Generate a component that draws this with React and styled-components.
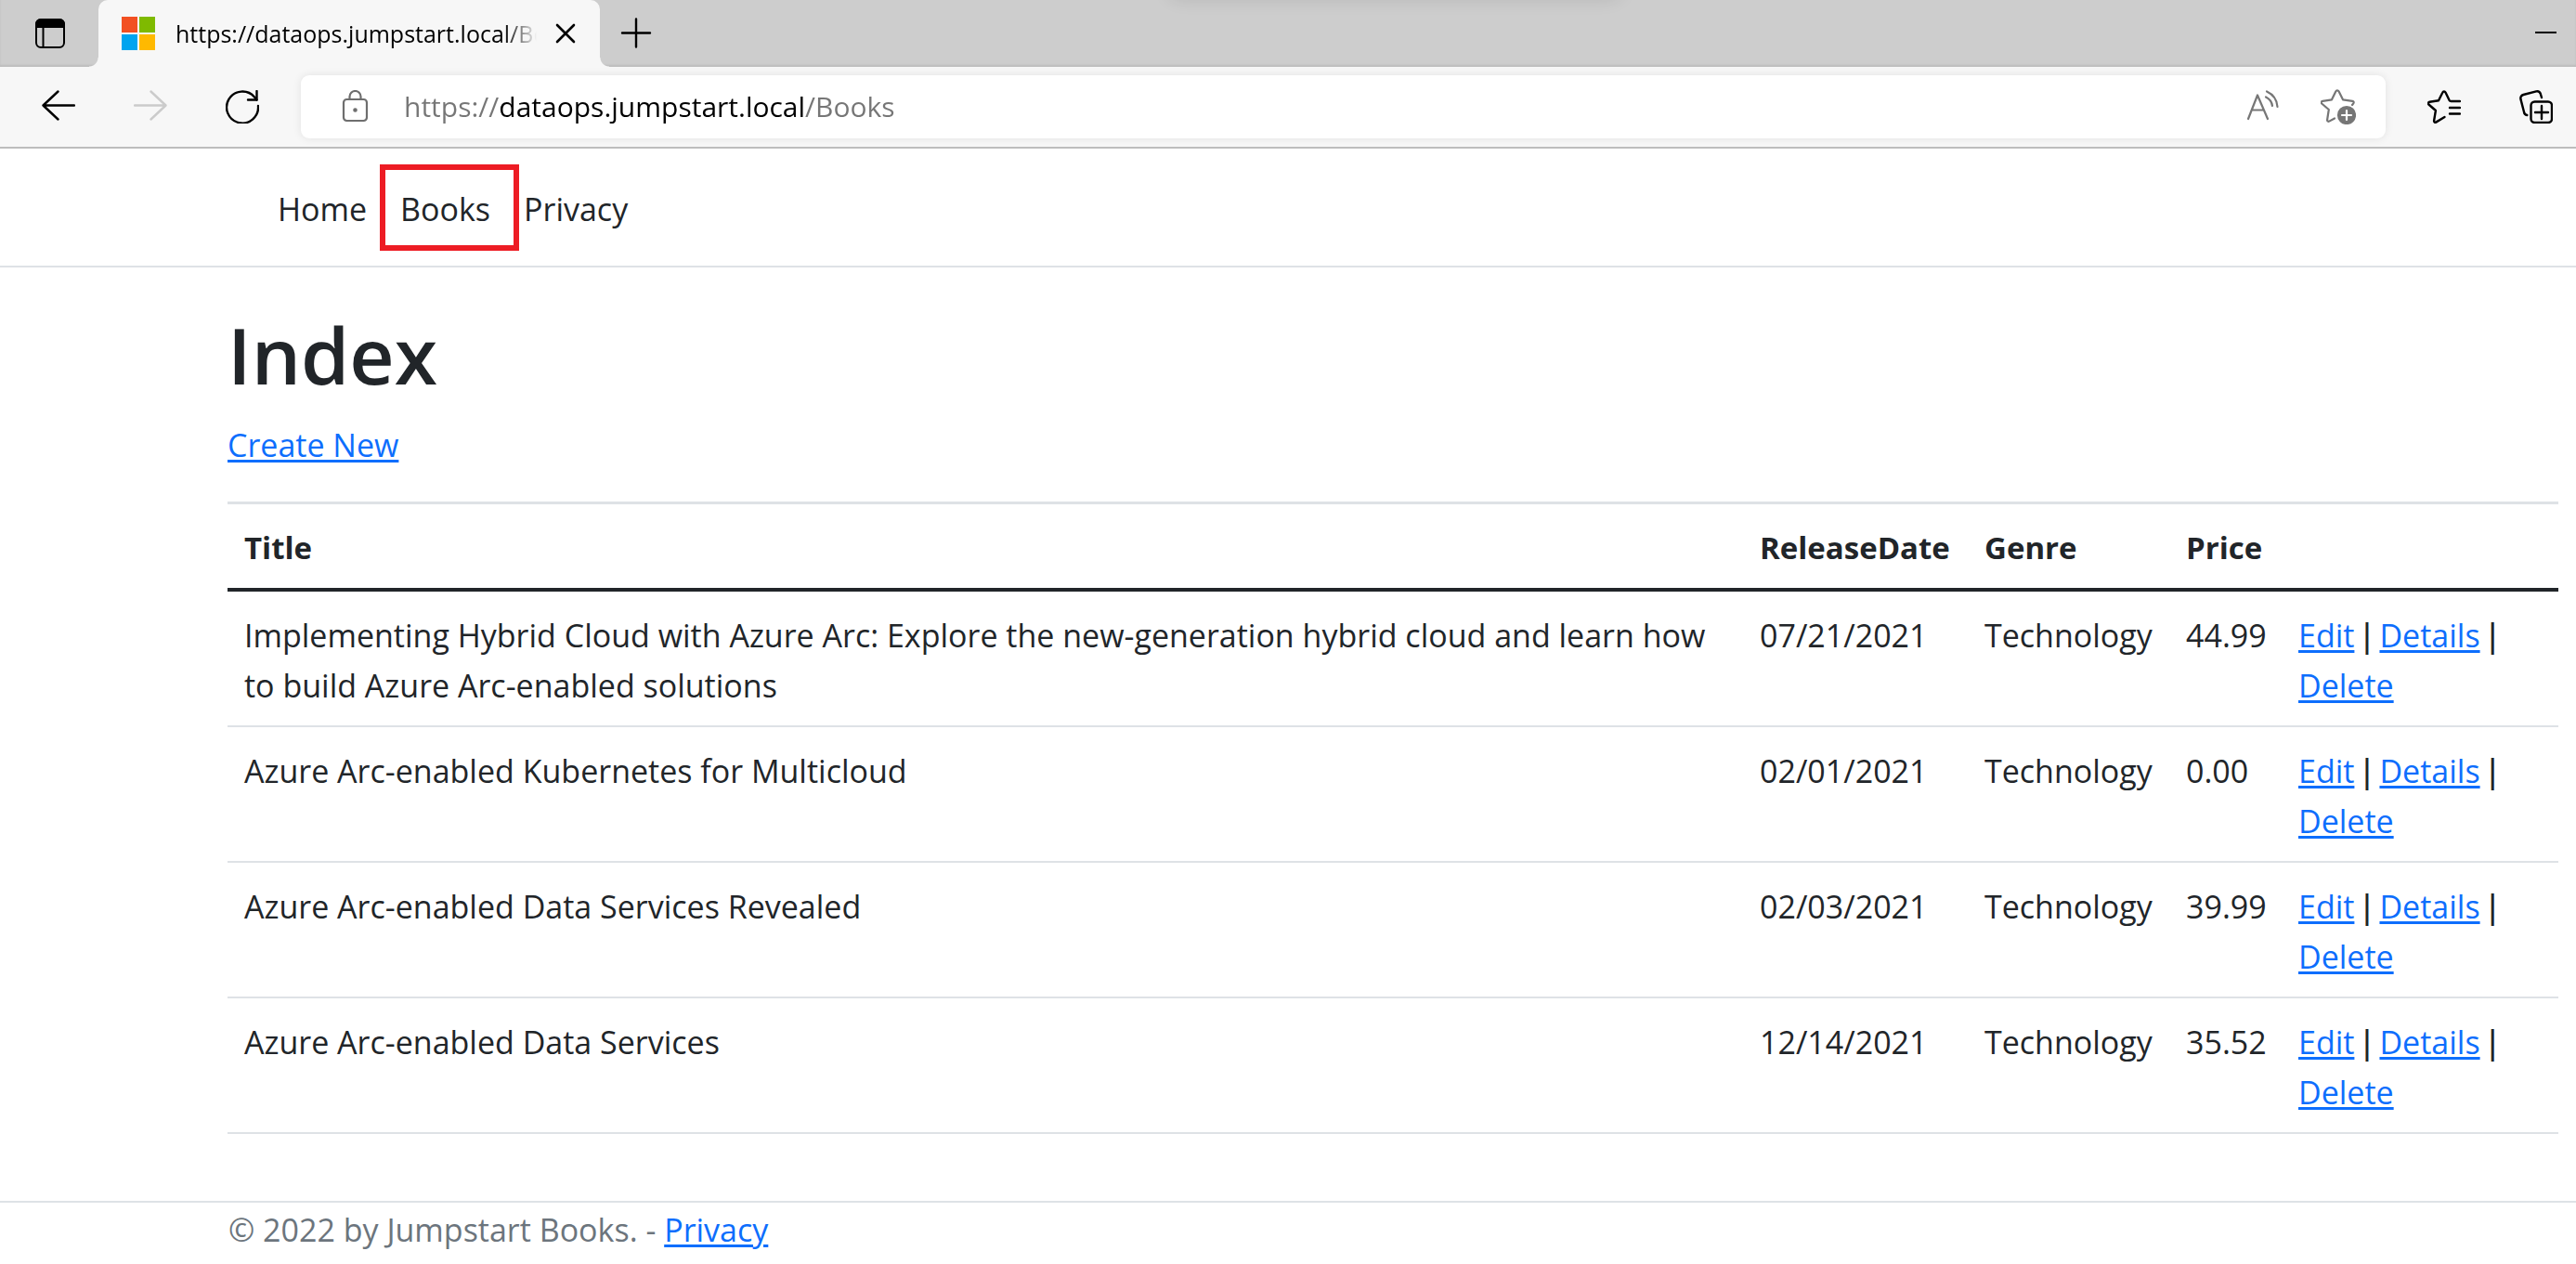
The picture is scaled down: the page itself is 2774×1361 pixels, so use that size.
import React from "react";
import styled, { createGlobalStyle } from "styled-components";

const GlobalStyle = createGlobalStyle`
  *, *::before, *::after { box-sizing: border-box; }
  body {
    margin: 0;
    background: #fff;
    color: #212529;
    font-family: "Open Sans", "Noto Sans", sans-serif;
    font-size: 34px;
    line-height: 54px;
  }
`;

/* ---------- browser frame ---------- */

const TabStrip = styled.div`
  position: relative;
  display: flex;
  align-items: center;
  height: 72px;
  padding: 0 21px 0 36px;
  background: #cdcdcd;
  box-shadow: inset 0 -2px 2px rgba(0, 0, 0, 0.08);
  overflow: hidden;
`;

const SnapBarShadow = styled.div`
  position: absolute;
  top: -28px;
  left: 1262px;
  width: 480px;
  height: 20px;
  border-radius: 10px;
  box-shadow: 0 2px 20px 4px rgba(0, 0, 0, 0.12);
`;

const IconButton = styled.button`
  display: flex;
  flex: none;
  align-items: center;
  justify-content: center;
  padding: 0;
  border: 0;
  background: none;
  color: ${(p) => p.$color || "#000"};
`;

const Tab = styled.div`
  position: relative;
  display: flex;
  align-items: center;
  width: 540px;
  height: 72px;
  margin: 0 21px 0 34px;
  padding: 0 26px 0 25px;
  border-radius: 10px 10px 0 0;
  background: #f7f7f7;

  &::before,
  &::after {
    content: "";
    position: absolute;
    bottom: 0;
    width: 10px;
    height: 10px;
  }
  &::before {
    left: -10px;
    background: radial-gradient(circle at 0 0, transparent 9px, #f7f7f7 10px);
  }
  &::after {
    right: -10px;
    background: radial-gradient(circle at 100% 0, transparent 9px, #f7f7f7 10px);
  }
`;

const TabTitle = styled.span`
  flex: 1;
  min-width: 0;
  margin: 0 20px 0 22px;
  overflow: hidden;
  color: #000;
  font-size: 25px;
  line-height: 36px;
  white-space: nowrap;
  mask-image: linear-gradient(to right, #000 calc(100% - 36px), transparent);
`;

const TabEnd = styled.div`
  display: flex;
  flex: 1;
  justify-content: space-between;
`;

const Toolbar = styled.div`
  display: flex;
  align-items: center;
  gap: 63px;
  height: 88px;
  padding: 0 25px 0 45px;
  border-bottom: 2px solid #bdbdbd;
  background: #f7f7f7;
`;

const AddressBar = styled.div`
  display: flex;
  flex: 1;
  align-items: center;
  height: 68px;
  margin: 0 -18px;
  padding: 0 32px 0 41px;
  border-radius: 9px;
  background: #fff;
  box-shadow: 0 0 10px rgba(0, 0, 0, 0.09);
`;

const AddressField = styled.input`
  flex: 1;
  min-width: 0;
  margin: 0 32px 0 34px;
  padding: 0;
  border: 0;
  outline: 0;
  background: linear-gradient(to right, #767676 102px, #000 102px 431px, #767676 431px);
  background-clip: text;
  color: transparent;
  font-family: inherit;
  font-size: 30px;
  line-height: 44px;
`;

const AddressActions = styled.div`
  display: flex;
  gap: 44px;
`;

/* ---------- site ---------- */

const SiteNav = styled.nav`
  display: flex;
  align-items: center;
  padding: 17px 19px 16px 281px;
  border-bottom: 2px solid #dee2e6;
`;

const NavLink = styled.a`
  position: relative;
  min-width: 132px;
  padding: 20px 18px 16px;
  color: #212529;
  line-height: 57px;
  text-decoration: none;
  white-space: nowrap;
`;

const Highlight = styled.span`
  position: absolute;
  top: 0;
  left: -4px;
  width: 150px;
  height: 93px;
  border: 6px solid #ed1c24;
`;

const Main = styled.main`
  padding: 40px 19px 0 245px;
`;

const Heading = styled.h1`
  margin: 0 0 16px;
  font-size: 84px;
  font-weight: 600;
  line-height: 108px;
`;

const Paragraph = styled.p`
  margin: 0 0 34px;
`;

const Link = styled.a`
  color: #0d6efd;
  text-decoration: underline;
  text-decoration-thickness: 3px;
  text-underline-offset: 3px;
`;

const Separator = styled.span`
  font-family: "Liberation Sans", Arial, sans-serif;
  font-size: 36px;
  line-height: 1;
`;

const Table = styled.table`
  width: 100%;
  table-layout: fixed;
  border-collapse: separate;
  border-spacing: 0;
  border-top: 3px solid #dee2e6;
`;

const HeadCell = styled.th`
  width: ${(p) => p.$width || "auto"};
  padding: 20px 0 16px 18px;
  border-bottom: 4px solid #212529;
  font-size: 33px;
  font-weight: 700;
  text-align: left;
  white-space: nowrap;
`;

const Cell = styled.td`
  padding: 20px ${(p) => p.$end || "0"} 16px 18px;
  border-bottom: 2px solid #dee2e6;
  vertical-align: top;
`;

const Footer = styled.footer`
  margin-top: 72px;
  padding: 2px 19px 10px 246px;
  border-top: 2px solid #dee2e6;
  color: #6c757d;
`;

/* ---------- icons ---------- */

const Stroke = ({ size = 36, width = 2.4, children }) => (
  <svg
    width={size}
    height={size}
    viewBox={`0 0 ${size} ${size}`}
    fill="none"
    stroke="currentColor"
    strokeWidth={width}
    strokeLinecap="round"
    strokeLinejoin="round"
    aria-hidden="true"
  >
    {children}
  </svg>
);

const WorkspaceIcon = () => (
  <Stroke width={2}>
    <rect x="3" y="3" width="30" height="30" rx="5" />
    <path d="M3 11V8a5 5 0 0 1 5-5h20a5 5 0 0 1 5 5v3z" fill="currentColor" />
    <path d="M10.5 11v22" />
  </Stroke>
);

const MicrosoftLogo = () => (
  <svg width="36" height="36" viewBox="0 0 36 36" aria-hidden="true">
    <path fill="#f25022" d="M0 0h17v17H0z" />
    <path fill="#7fba00" d="M19 0h17v17H19z" />
    <path fill="#00a4ef" d="M0 19h17v17H0z" />
    <path fill="#ffb900" d="M19 19h17v17H19z" />
  </svg>
);

const CloseIcon = () => (
  <Stroke size={22} width={2.6}>
    <path d="M2 2l18 18M20 2L2 20" />
  </Stroke>
);

const PlusIcon = () => (
  <Stroke width={2.4}>
    <path d="M18 2.500v30M3 17.500h30" />
  </Stroke>
);

const MinimizeIcon = () => (
  <svg width="23" height="36" viewBox="0 0 23 36" aria-hidden="true">
    <path d="M0 16h23v2H0z" />
  </svg>
);

const BackIcon = () => (
  <Stroke>
    <path d="M17.5 1.5L1.5 16.5l16 15M1.5 16.5H35" />
  </Stroke>
);

const ForwardIcon = () => (
  <Stroke>
    <path d="M18.5 1.5l16 15-16 15M34.5 16.5H1" />
  </Stroke>
);

const RefreshIcon = () => (
  <Stroke>
    <path d="M35 17A17 17 0 1 1 31 7.500L33.500 10.500" />
    <path d="M33.500 1v9.500H24" />
  </Stroke>
);

const LockIcon = () => (
  <Stroke width={2.2}>
    <rect x="5" y="10" width="25" height="23" rx="3.500" />
    <path d="M11.500 10V7a6 6 0 0 1 12 0v3" />
    <circle cx="17.500" cy="21.500" r="1.200" fill="currentColor" />
  </Stroke>
);

const ReadAloudIcon = () => (
  <Stroke width={2.2}>
    <path d="M2 31L12 5.500 23 31M6 21.500h13" />
    <path d="M22 1.500C28.500 4.500 33 10.500 33.500 18" />
    <path d="M21 7.500c4 2 6.500 5.500 7 9.500" />
  </Stroke>
);

const AddFavoriteIcon = () => (
  <Stroke size={38} width={2.2}>
    <path d="M34 17l1.300-1.700c.8-1.100.2-2.300-1-2.500L24 11.300 19.500 2.300c-.7-1.300-2.500-1.300-3.100 0L12 11.300 2.100 12.800c-1.400.2-1.900 1.700-.9 2.700L8.800 22 7.100 33c-.2 1.300 1 2.100 2.100 1.600L15 31.500" />
    <circle cx="28" cy="28" r="9" fill="currentColor" />
    <path d="M28 23v10M23 28h10" stroke="#fff" />
  </Stroke>
);

const FavoritesIcon = () => (
  <Stroke>
    <path d="M35 12H25.500c-1 0-1.500-.3-2-1.200L19.500 2.500c-.7-1.300-2.500-1.300-3.100 0L12 11.300 2.300 12.800c-1.400.2-1.900 1.700-.9 2.700L8.900 22 7.100 33c-.2 1.300 1 2.100 2.100 1.600L18.500 29" />
    <path d="M24 19h11M24 25.500h11" />
  </Stroke>
);

const CollectionsIcon = () => (
  <Stroke>
    <rect x="12.500" y="12.500" width="22.500" height="22.500" rx="4" />
    <path d="M24 17v14M17 24h14" />
    <path d="M24 8L22.800 4a4 4 0 0 0-4.600-2.600L4.300 5a4 4 0 0 0-2.900 4.600L5 23.500A4 4 0 0 0 8.300 27" />
  </Stroke>
);

/* ---------- content ---------- */

const books = [
  {
    title:
      "Implementing Hybrid Cloud with Azure Arc: Explore the new-generation hybrid cloud and learn how to build Azure Arc-enabled solutions",
    date: "07/21/2021",
    genre: "Technology",
    price: "44.99",
  },
  { title: "Azure Arc-enabled Kubernetes for Multicloud", date: "02/01/2021", genre: "Technology", price: "0.00" },
  { title: "Azure Arc-enabled Data Services Revealed", date: "02/03/2021", genre: "Technology", price: "39.99" },
  { title: "Azure Arc-enabled Data Services", date: "12/14/2021", genre: "Technology", price: "35.52" },
];

const BookRow = ({ book }) => (
  <tr>
    <Cell $end="18px">{book.title}</Cell>
    <Cell>{book.date}</Cell>
    <Cell>{book.genre}</Cell>
    <Cell>{book.price}</Cell>
    <Cell $end="54px">
      <Link href="#edit">Edit</Link> <Separator>|</Separator> <Link href="#details">Details</Link>{" "}
      <Separator>|</Separator> <Link href="#delete">Delete</Link>
    </Cell>
  </tr>
);

export default function App() {
  return (
    <>
      <GlobalStyle />
      <TabStrip>
        <SnapBarShadow />
        <IconButton aria-label="Tab actions"><WorkspaceIcon /></IconButton>
        <Tab>
          <MicrosoftLogo />
          <TabTitle>https://dataops.jumpstart.local/Books</TabTitle>
          <IconButton aria-label="Close tab"><CloseIcon /></IconButton>
        </Tab>
        <TabEnd>
          <IconButton aria-label="New tab"><PlusIcon /></IconButton>
          <IconButton aria-label="Minimize"><MinimizeIcon /></IconButton>
        </TabEnd>
      </TabStrip>
      <Toolbar>
        <IconButton aria-label="Back"><BackIcon /></IconButton>
        <IconButton aria-label="Forward" $color="#cbcbcb"><ForwardIcon /></IconButton>
        <IconButton aria-label="Refresh"><RefreshIcon /></IconButton>
        <AddressBar>
          <IconButton aria-label="Site information" $color="#6e6e6e"><LockIcon /></IconButton>
          <AddressField aria-label="Address" type="text" defaultValue="https://dataops.jumpstart.local/Books" />
          <AddressActions>
            <IconButton aria-label="Read aloud" $color="#767676"><ReadAloudIcon /></IconButton>
            <IconButton aria-label="Add to favorites" $color="#767676"><AddFavoriteIcon /></IconButton>
          </AddressActions>
        </AddressBar>
        <IconButton aria-label="Favorites"><FavoritesIcon /></IconButton>
        <IconButton aria-label="Collections"><CollectionsIcon /></IconButton>
      </Toolbar>

      <SiteNav>
        <NavLink href="#home">Home</NavLink>
        <NavLink href="#books">Books<Highlight /></NavLink>
        <NavLink href="#privacy">Privacy</NavLink>
      </SiteNav>
      <Main>
        <Heading>Index</Heading>
        <Paragraph><Link href="#create">Create New</Link></Paragraph>
        <Table>
          <thead>
            <tr>
              <HeadCell>Title</HeadCell>
              <HeadCell $width="242px">ReleaseDate</HeadCell>
              <HeadCell $width="217px">Genre</HeadCell>
              <HeadCell $width="121px">Price</HeadCell>
              <HeadCell $width="298px" />
            </tr>
          </thead>
          <tbody>
            {books.map((book) => <BookRow key={book.title} book={book} />)}
          </tbody>
        </Table>
      </Main>
      <Footer>
        © 2022 by Jumpstart Books. - <Link href="#privacy">Privacy</Link>
      </Footer>
    </>
  );
}
